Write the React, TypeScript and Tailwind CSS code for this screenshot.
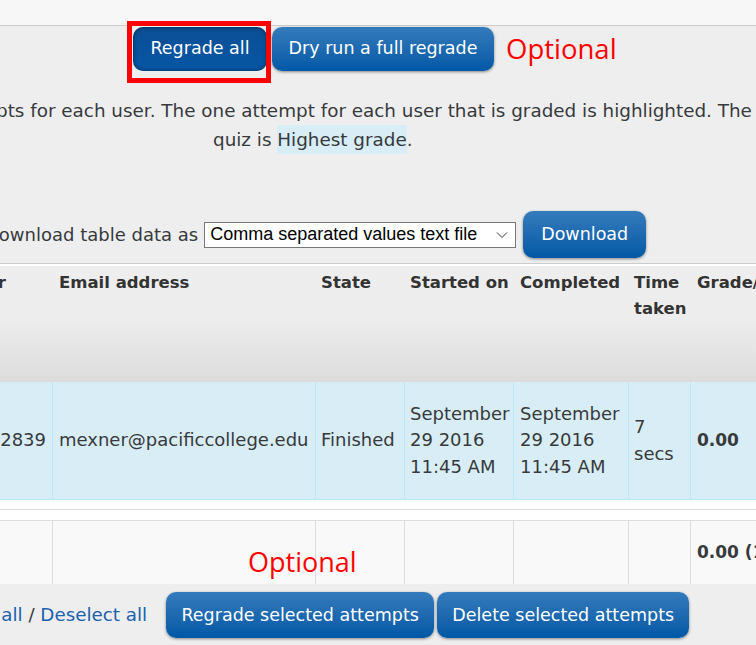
import React from "react";

const btnBase =
  "flex items-center justify-center rounded-[10px] text-white text-[17.5px] whitespace-nowrap bg-linear-to-b from-[#337bbb] to-[#0058a6] shadow-[0_1px_3px_rgba(0,0,0,0.45)]";

const cols = "grid grid-cols-[53px_263px_89px_109px_115px_62px_1fr]";

export default function App() {
  return (
    <div className="relative w-[756px] h-[645px] overflow-hidden bg-[#eeeeee] font-['DejaVu_Sans',sans-serif] text-[#373a3c] text-[18px]">
      {/* top band */}
      <div className="h-[26px] bg-[#f7f7f7] border-b border-[#cccccc]" />

      {/* regrade buttons */}
      <div className="flex items-center pl-[133px] gap-[5px] h-[45px]">
        <div className="w-[134px] h-[44px] flex items-center justify-center rounded-[10px] text-white text-[17.5px] whitespace-nowrap bg-linear-to-b from-[#0b4e95] to-[#0657a6] shadow-[inset_0_0_4px_rgba(0,0,0,0.55)]">
          Regrade all
        </div>
        <div className={btnBase + " w-[222px] h-[44px]"}>Dry run a full regrade</div>
        <span className="ml-[7px] font-['Open_Sans',sans-serif] text-[27.5px] text-[#ff0000] leading-none">
          Optional
        </span>
      </div>

      {/* explanation */}
      <div className="mt-[26px] leading-[28px] whitespace-nowrap text-[18.35px]">
        <div className="ml-[-4px]">
          pts for each user. The one attempt for each user that is graded is highlighted. The
        </div>
        <div className="pl-[213px]">
          quiz is{" "}
          <span className="inline-block bg-[#d9edf7] leading-[29px]">Highest grade</span>.
        </div>
      </div>

      {/* download row */}
      <div className="mt-[57px] h-[47px] flex items-center whitespace-nowrap">
        <span className="ml-[-15px]">Download table data as</span>
        <div className="ml-[6px] w-[312px] h-[26px] bg-white border border-[#767676] flex items-center pl-[5px] pr-[6px] font-['Liberation_Sans',sans-serif] text-[18px] text-black">
          <span className="flex-1">Comma separated values text file</span>
          <svg width="12" height="8" viewBox="0 0 12 8" className="mr-[1px]">
            <path d="M1 1.5 L6 6.5 L11 1.5" fill="none" stroke="#333" strokeWidth="1" />
          </svg>
        </div>
        <div className={btnBase + " ml-[7px] w-[123px] h-[47px]"}>Download</div>
      </div>

      {/* table */}
      <div className="mt-[5px] border-t border-[#cccccc]">
        <div className="h-[2px] bg-white" />
        {/* header */}
        <div
          className={
            cols +
            " h-[116px] bg-linear-to-b from-[#eeeeee] via-[#ededed] via-45% to-[#dcdcdc] font-bold text-[16.5px] leading-[26px] text-[#333333]"
          }
        >
          <div className="flex justify-end pr-[47px] pt-[4px] whitespace-nowrap">ID number</div>
          <div className="pl-[6px] pt-[4px]">Email address</div>
          <div className="pl-[5px] pt-[4px]">State</div>
          <div className="pl-[5px] pt-[4px] whitespace-nowrap">Started on</div>
          <div className="pl-[6px] pt-[4px]">Completed</div>
          <div className="pl-[5px] pt-[4px]">
            Time
            <br />
            taken
          </div>
          <div className="pl-[6px] pt-[4px] whitespace-nowrap">Grade/10.00</div>
        </div>

        {/* data row */}
        <div className={cols + " h-[118px] bg-[#d9edf7] border-b border-[#bce8f1] leading-[26.5px]"}>
          <div className="border-r border-[#bce8f1] flex items-center justify-end pr-[6px]">2839</div>
          <div className="border-r border-[#bce8f1] flex items-center pl-[6px] whitespace-nowrap">
            mexner@pacificcollege.edu
          </div>
          <div className="border-r border-[#bce8f1] flex items-center pl-[5px]">Finished</div>
          <div className="border-r border-[#bce8f1] flex items-center pl-[5px] whitespace-nowrap">
            <div>
              September
              <br />
              29 2016
              <br />
              11:45 AM
            </div>
          </div>
          <div className="border-r border-[#bce8f1] flex items-center pl-[6px] whitespace-nowrap">
            <div>
              September
              <br />
              29 2016
              <br />
              11:45 AM
            </div>
          </div>
          <div className="border-r border-[#bce8f1] flex items-center pl-[5px]">
            <div>
              7
              <br />
              secs
            </div>
          </div>
          <div className="flex items-center pl-[6px] font-bold text-[17px]">0.00</div>
        </div>

        {/* separators */}
        <div className="h-[10px] bg-white border-b border-[#dddddd]" />
        <div className="h-[11px] bg-white border-b border-[#dddddd]" />

        {/* summary row */}
        <div className={cols + " h-[63px] bg-[#f9f9f9]"}>
          <div className="border-r border-[#dddddd]" />
          <div className="border-r border-[#dddddd]" />
          <div className="border-r border-[#dddddd]" />
          <div className="border-r border-[#dddddd]" />
          <div className="border-r border-[#dddddd]" />
          <div className="border-r border-[#dddddd]" />
          <div className="flex items-center pl-[6px] font-bold text-[17px] whitespace-nowrap">0.00 (10.00)</div>
        </div>
      </div>

      {/* bottom actions */}
      <div className="flex items-center pt-[8px] whitespace-nowrap">
        <span className="ml-[-61px] text-[#1a62ad] text-[18.3px]">
          Select all <span className="text-[#373a3c]">/</span> Deselect all
        </span>
        <div className={btnBase + " ml-[19px] w-[268px] h-[46px]"}>Regrade selected attempts</div>
        <div className={btnBase + " ml-[3px] w-[252px] h-[46px]"}>Delete selected attempts</div>
      </div>

      {/* annotations */}
      <div className="absolute left-[127px] top-[21px] w-[144px] h-[62px] border-[5px] border-[#ff0000] pointer-events-none" />
      <div className="absolute left-[248px] top-[548px] font-['Open_Sans',sans-serif] text-[27px] text-[#ff0000] leading-none">
        Optional
      </div>
    </div>
  );
}
